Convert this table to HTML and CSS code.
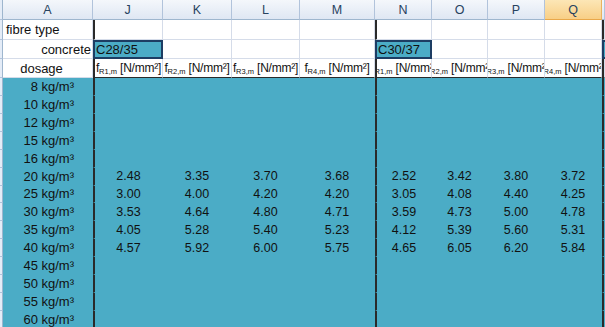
FILE: index.html
```html
<!DOCTYPE html>
<html lang="en">
<head>
    <meta charset="UTF-8">
    <title>fibre dosage sheet</title>
    <link rel="stylesheet" href="styles.css">
</head>
<body>
<div class="sheet">

    <!-- column letters -->
    <div class="row head">
        <div class="rh corner"></div>
        <div>A</div>
        <div>J</div>
        <div>K</div>
        <div>L</div>
        <div>M</div>
        <div>N</div>
        <div>O</div>
        <div>P</div>
        <div class="sel">Q</div>
        <div></div>
    </div>

    <div class="row r-fibre">
        <div class="rh"></div>
        <div class="lbl-left">fibre type</div>
        <div class="tk"></div>
        <div></div>
        <div></div>
        <div></div>
        <div class="tk"></div>
        <div></div>
        <div></div>
        <div></div>
        <div class="tk"></div>
    </div>

    <div class="row r-concrete">
        <div class="rh"></div>
        <div class="lbl-right">concrete</div>
        <div class="grade">C28/35</div>
        <div></div>
        <div></div>
        <div></div>
        <div class="grade">C30/37</div>
        <div></div>
        <div></div>
        <div></div>
        <div class="grade"></div>
    </div>

    <div class="row r-dosage">
        <div class="rh"></div>
        <div class="lbl-dosage">dosage</div>
        <div class="tk fr"><span class="fx">f<sub>R1,m</sub> [N/mm²]</span></div>
        <div class="fr"><span class="fx">f<sub>R2,m</sub> [N/mm²]</span></div>
        <div class="fr"><span class="fx">f<sub>R3,m</sub> [N/mm²]</span></div>
        <div class="fr"><span class="fx">f<sub>R4,m</sub> [N/mm²]</span></div>
        <div class="tk fr"><span class="fx">f<sub>R1,m</sub> [N/mm²]</span></div>
        <div class="fr"><span class="fx">f<sub>R2,m</sub> [N/mm²]</span></div>
        <div class="fr"><span class="fx">f<sub>R3,m</sub> [N/mm²]</span></div>
        <div class="fr"><span class="fx">f<sub>R4,m</sub> [N/mm²]</span></div>
        <div class="tk fr"></div>
    </div>

    <!-- dosage rows -->
    <div class="row data">
        <div class="rh"></div><div class="dose">8 kg/m³</div>
        <div class="tk"></div><div></div><div></div><div></div>
        <div class="tk"></div><div></div><div></div><div></div><div class="tk"></div>
    </div>
    <div class="row data">
        <div class="rh"></div><div class="dose">10 kg/m³</div>
        <div class="tk"></div><div></div><div></div><div></div>
        <div class="tk"></div><div></div><div></div><div></div><div class="tk"></div>
    </div>
    <div class="row data">
        <div class="rh"></div><div class="dose">12 kg/m³</div>
        <div class="tk"></div><div></div><div></div><div></div>
        <div class="tk"></div><div></div><div></div><div></div><div class="tk"></div>
    </div>
    <div class="row data">
        <div class="rh"></div><div class="dose">15 kg/m³</div>
        <div class="tk"></div><div></div><div></div><div></div>
        <div class="tk"></div><div></div><div></div><div></div><div class="tk"></div>
    </div>
    <div class="row data">
        <div class="rh"></div><div class="dose">16 kg/m³</div>
        <div class="tk"></div><div></div><div></div><div></div>
        <div class="tk"></div><div></div><div></div><div></div><div class="tk"></div>
    </div>
    <div class="row data">
        <div class="rh"></div><div class="dose">20 kg/m³</div>
        <div class="tk num">2.48</div><div class="num">3.35</div><div class="num">3.70</div><div class="num">3.68</div>
        <div class="tk num">2.52</div><div class="num">3.42</div><div class="num">3.80</div><div class="num">3.72</div><div class="tk"></div>
    </div>
    <div class="row data">
        <div class="rh"></div><div class="dose">25 kg/m³</div>
        <div class="tk num">3.00</div><div class="num">4.00</div><div class="num">4.20</div><div class="num">4.20</div>
        <div class="tk num">3.05</div><div class="num">4.08</div><div class="num">4.40</div><div class="num">4.25</div><div class="tk"></div>
    </div>
    <div class="row data">
        <div class="rh"></div><div class="dose">30 kg/m³</div>
        <div class="tk num">3.53</div><div class="num">4.64</div><div class="num">4.80</div><div class="num">4.71</div>
        <div class="tk num">3.59</div><div class="num">4.73</div><div class="num">5.00</div><div class="num">4.78</div><div class="tk"></div>
    </div>
    <div class="row data">
        <div class="rh"></div><div class="dose">35 kg/m³</div>
        <div class="tk num">4.05</div><div class="num">5.28</div><div class="num">5.40</div><div class="num">5.23</div>
        <div class="tk num">4.12</div><div class="num">5.39</div><div class="num">5.60</div><div class="num">5.31</div><div class="tk"></div>
    </div>
    <div class="row data">
        <div class="rh"></div><div class="dose">40 kg/m³</div>
        <div class="tk num">4.57</div><div class="num">5.92</div><div class="num">6.00</div><div class="num">5.75</div>
        <div class="tk num">4.65</div><div class="num">6.05</div><div class="num">6.20</div><div class="num">5.84</div><div class="tk"></div>
    </div>
    <div class="row data">
        <div class="rh"></div><div class="dose">45 kg/m³</div>
        <div class="tk"></div><div></div><div></div><div></div>
        <div class="tk"></div><div></div><div></div><div></div><div class="tk"></div>
    </div>
    <div class="row data">
        <div class="rh"></div><div class="dose">50 kg/m³</div>
        <div class="tk"></div><div></div><div></div><div></div>
        <div class="tk"></div><div></div><div></div><div></div><div class="tk"></div>
    </div>
    <div class="row data">
        <div class="rh"></div><div class="dose">55 kg/m³</div>
        <div class="tk"></div><div></div><div></div><div></div>
        <div class="tk"></div><div></div><div></div><div></div><div class="tk"></div>
    </div>
    <div class="row data">
        <div class="rh"></div><div class="dose">60 kg/m³</div>
        <div class="tk"></div><div></div><div></div><div></div>
        <div class="tk"></div><div></div><div></div><div></div><div class="tk"></div>
    </div>

</div>
</body>
</html>
```

FILE: styles.css
```css
body {
    margin: 0;
    padding: 0;
    background-color: #ffffff;
    font-family: "Liberation Sans", Arial, sans-serif;
    font-size: 12.5px;
    color: #111111;
}

.sheet {
    width: 605px;
    height: 327px;
    overflow: hidden;
}

/* one grid per spreadsheet row, same columns everywhere */
.row {
    display: grid;
    grid-template-columns: 3px 90px 70px 69px 68px 75px 57px 56px 57px 57px 3px;
}

.row > div {
    box-sizing: border-box;
    display: flex;
    align-items: center;
    white-space: nowrap;
    overflow: hidden;
    border-right: 1px solid #d5dce9;
    border-bottom: 1px solid #d5dce9;
}

/* column letters */
.head {
    height: 20px;
}

.head > div {
    justify-content: center;
    background: linear-gradient(#f4f7fb, #dfe7f3);
    border-right: 1px solid #b1c3db;
    border-bottom: 1px solid #9eb6ce;
    color: #27425f;
    font-size: 12.5px;
}

.head > div.sel {
    background: linear-gradient(#fce6b6, #f8cf86);
    border-right-color: #e9b360;
    border-bottom-color: #e9a84a;
}

.head > div.corner {
    background: #c7d6ea;
}

/* row header strip at the far left */
.row > div.rh {
    background-color: #e4ecf7;
    border-right: 1px solid #9eb6ce;
    border-bottom: 1px solid #b1c3db;
}

.r-fibre {
    height: 20px;
}

.r-concrete {
    height: 19px;
}

.r-dosage {
    height: 19px;
}

.data {
    height: 17.93px;
}

/* thick vertical rules between the two concrete blocks */
.row > div.tk {
    border-left: 2px solid #2a2a2a;
}

.lbl-left {
    padding-left: 3px;
    font-size: 13px;
}

.lbl-right {
    justify-content: flex-end;
    padding-right: 1px;
    font-size: 13px;
}

.lbl-dosage {
    justify-content: center;
    padding-right: 12px;
    font-size: 13px;
}

.row > div.grade {
    background-color: #4bacc6;
    border: 2px solid #1d3d63;
    padding-left: 1px;
    font-size: 13px;
}

/* f_R,m headers, centred and clipped on both sides */
.row > div.fr {
    justify-content: center;
    border-bottom: 1px solid #2a2a2a;
}

.fx {
    flex-shrink: 0;
    letter-spacing: -0.25px;
    font-size: 12px;
}

.fx sub {
    font-size: 7.5px;
    vertical-align: -2px;
    letter-spacing: 0;
}

/* teal block */
.data > div {
    background-color: #4bacc6;
    border-right-color: #4bacc6;
    border-bottom-color: #4bacc6;
}

.dose {
    justify-content: flex-end;
    padding-right: 18px;
    font-size: 13px;
}

.num {
    justify-content: center;
}
```
